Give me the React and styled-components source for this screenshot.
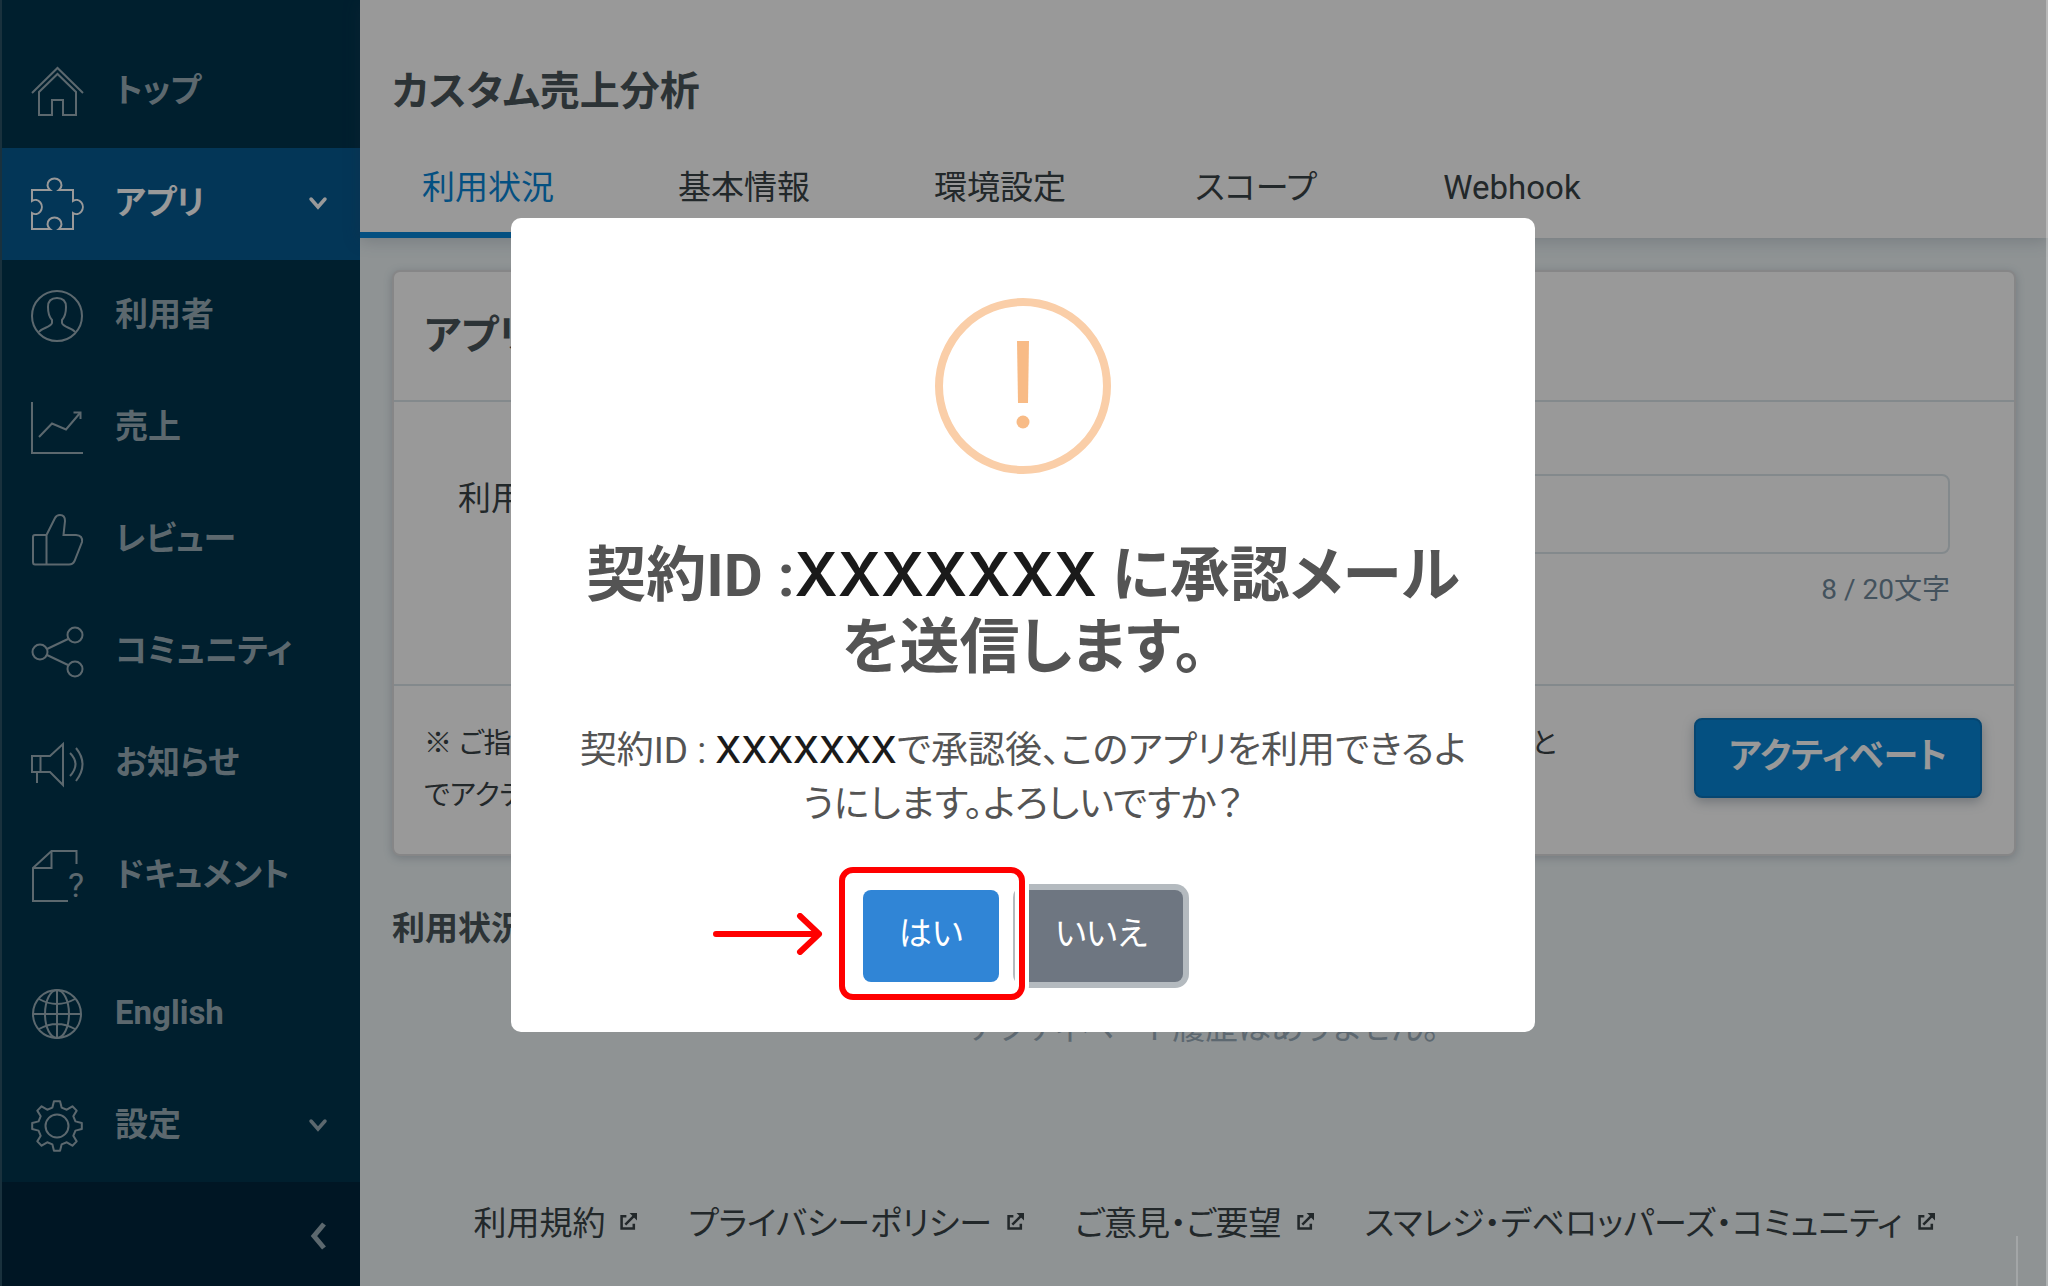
import React from 'react';
import styled, { createGlobalStyle } from 'styled-components';

const GlobalStyle = createGlobalStyle`
  * {
    box-sizing: border-box;
  }

  body {
    margin: 0;
    background: #eef5f7;
    color: #3a4347;
    font-family: Roboto, 'Noto Sans CJK JP', sans-serif;
    font-size: 33px;
    font-feature-settings: 'palt';
  }

  h1, h2, p {
    margin: 0;
  }

  a {
    color: inherit;
    text-decoration: none;
  }

  button, input {
    font: inherit;
    font-feature-settings: inherit;
  }
`;

const Page = styled.div`
  display: flex;
  min-height: 100vh;
`;

/* ---------- sidebar ---------- */

const Sidebar = styled.nav`
  display: flex;
  flex-direction: column;
  flex: none;
  width: 360px;
  padding-top: 36px;
  background: #00344e;
  border-left: 2px solid #2b5366;
`;

const NavList = styled.div`
  display: flex;
  flex-direction: column;
  margin-bottom: ${(props) => (props.$last ? 'auto' : '26px')};
`;

const NavItem = styled.a`
  display: flex;
  align-items: center;
  gap: 32px;
  height: 112px;
  padding: 0 33px 0 29px;
  font-weight: bold;
  color: ${(props) => (props.$active ? '#ffffff' : '#99aeb8')};
  background: ${(props) => (props.$active ? '#065a91' : 'transparent')};
`;

const NavIcon = styled.svg`
  flex: none;
  width: 52px;
  height: 52px;
  overflow: visible;
  fill: none;
  stroke: currentColor;
  stroke-width: 2;
`;

const IconMark = styled.text`
  fill: currentColor;
  stroke: none;
  font-family: Roboto, sans-serif;
  font-size: 34px;
  font-weight: 400;
`;

const NavLabel = styled.span`
  flex: 1;
  line-height: 48px;
  padding-bottom: 2px;
`;

const Chevron = styled.svg`
  flex: none;
  width: 18px;
  height: 12px;
  overflow: visible;
  fill: none;
  stroke: currentColor;
  stroke-width: 3.5;
  stroke-linecap: round;
`;

const CollapseButton = styled.button`
  display: flex;
  align-items: center;
  justify-content: flex-end;
  height: 104px;
  padding: 4px 34px 0;
  border: 0;
  background: #00253c;
  color: #99aeb8;
`;

const CollapseIcon = styled.svg`
  width: 16px;
  height: 28px;
  fill: none;
  stroke: currentColor;
  stroke-width: 5;
`;

/* ---------- main ---------- */

const Main = styled.main`
  display: flex;
  flex-direction: column;
  flex: 1;
  min-width: 0;
`;

const Header = styled.header`
  background: #ffffff;
  box-shadow: 0 2px 16px rgba(60, 80, 100, 0.25);
`;

const PageTitle = styled.h1`
  padding: 62px 32px 0;
  font-size: 40px;
  line-height: 60px;
  color: #4a555a;
`;

const Tabs = styled.div`
  display: flex;
  margin-top: 16px;
`;

const Tab = styled.button`
  width: 256px;
  height: 100px;
  padding: 6px 0 0;
  border: 0;
  border-bottom: 6px solid ${(props) => (props.$active ? '#0885d7' : 'transparent')};
  background: none;
  line-height: 48px;
  color: ${(props) => (props.$active ? '#0885d7' : '#3a4347')};
`;

const Content = styled.div`
  display: flex;
  flex-direction: column;
  flex: 1;
  padding: 32px 32px 34px;
`;

const Card = styled.section`
  border: 2px solid #dfe0e2;
  border-radius: 8px;
  background: #ffffff;
  box-shadow: 0 2px 8px rgba(60, 80, 100, 0.25);
`;

const CardTitle = styled.h2`
  height: 130px;
  padding: 34px 30px;
  border-bottom: 2px solid #dbe5ea;
  font-size: 40px;
  line-height: 60px;
  color: #4a555a;
`;

const Field = styled.div`
  display: flex;
  height: 284px;
  padding: 72px 64px 0;
  border-bottom: 2px solid #dbe5ea;
`;

const FieldLabel = styled.label`
  width: 300px;
  line-height: 50px;
`;

const FieldControl = styled.div`
  display: flex;
  flex-direction: column;
  flex: 1;
`;

const TextInput = styled.input`
  height: 80px;
  padding: 0 20px;
  border: 2px solid #dbe5ea;
  border-radius: 8px;
  background: #ffffff;
  color: #3a4347;
`;

const Counter = styled.span`
  padding-top: 16px;
  font-size: 28px;
  line-height: 40px;
  text-align: right;
  color: #70899b;
`;

const CardFooter = styled.div`
  display: flex;
  align-items: flex-start;
  justify-content: space-between;
  height: 168px;
  padding: 32px 32px 32px 30px;
`;

const Note = styled.p`
  font-size: 28px;
  line-height: 52px;
`;

const ActivateButton = styled.button`
  flex: none;
  width: 288px;
  height: 80px;
  padding: 0 0 2px;
  border: 2px solid #0a76bd;
  border-radius: 8px;
  background: #0885d7;
  box-shadow: 0 4px 12px rgba(60, 80, 100, 0.35);
  font-size: 35px;
  line-height: 48px;
  font-weight: bold;
  color: #ffffff;
`;

const SectionTitle = styled.h2`
  padding-top: 48px;
  font-size: 33px;
  line-height: 50px;
  color: #4a555a;
`;

const Empty = styled.p`
  padding-top: 50px;
  line-height: 48px;
  text-align: center;
  color: #9badbb;
`;

const Footer = styled.footer`
  display: flex;
  justify-content: center;
  gap: 51px;
  margin-top: auto;
`;

const FooterLink = styled.a`
  display: flex;
  align-items: center;
  gap: 15px;
  line-height: 56px;
`;

const LinkIcon = styled.svg`
  width: 17px;
  height: 17px;
  margin-bottom: 6px;
  fill: none;
  stroke: currentColor;
  stroke-width: 2.4;
`;

/* edge of the widget docked in the lower corner */
const DockEdge = styled.div`
  position: fixed;
  right: 30px;
  bottom: 0;
  width: 2px;
  height: 50px;
  background: rgba(255, 255, 255, 0.18);
`;

/* ---------- dialog ---------- */

const Overlay = styled.div`
  position: fixed;
  inset: 0;
  display: flex;
  align-items: center;
  justify-content: center;
  padding-bottom: 36px;
  border-right: 2px solid rgba(255, 255, 255, 0.3);
  background: rgba(0, 0, 0, 0.4);
`;

const Dialog = styled.div`
  display: flex;
  flex-direction: column;
  align-items: center;
  width: 1024px;
  max-width: 100%;
  padding: 80px 40px 50px;
  border-radius: 10px;
  background: #ffffff;
  text-align: center;
  color: #545454;
`;

const WarningIcon = styled.svg`
  width: 176px;
  height: 176px;
`;

const DialogTitle = styled.h2`
  padding-top: 66px;
  font-size: 60px;
  line-height: 72px;
`;

const DialogText = styled.p`
  padding-top: 40px;
  font-size: 37px;
  line-height: 54px;
`;

const Masked = styled.span`
  font-family: Inter, sans-serif;
  font-weight: ${(props) => (props.$strong ? 600 : 500)};
  line-height: 1;
  color: #1a1a1a;
`;

const Actions = styled.div`
  display: flex;
  gap: 20px;
  padding-top: 58px;
`;

const DialogButton = styled.button`
  height: 92px;
  padding: 0 36px 4px;
  border: 0;
  border-radius: 8px;
  font-size: 33px;
  line-height: 48px;
  color: #ffffff;
  background: ${(props) => (props.$focused ? '#6e7681' : '#3085d6')};
  box-shadow: ${(props) => (props.$focused ? '0 0 0 6px #b4babf' : 'none')};
`;

const Pointed = styled.div`
  position: relative;
  z-index: 1;
`;

const Frame = styled.div`
  position: absolute;
  inset: -23px -26px -18px -24px;
  border: 6px solid #ff0000;
  border-radius: 14px;
  box-shadow: 0 0 0 4px #ffffff, inset 0 0 0 4px #ffffff;
  pointer-events: none;
`;

const Arrow = styled.svg`
  position: absolute;
  top: 23px;
  right: 176px;
  width: 110px;
  height: 42px;
  fill: none;
  stroke: #ff0000;
  stroke-width: 6;
  stroke-linecap: round;
  stroke-linejoin: round;
`;

const gearPoints = [];
for (let i = 0; i < 8; i += 1) {
  [[-14, 19], [-7, 25], [7, 25], [14, 19]].forEach(([deg, r]) => {
    const a = ((i * 45 + deg) * Math.PI) / 180;
    gearPoints.push(`${(26 + r * Math.sin(a)).toFixed(2)},${(26 - r * Math.cos(a)).toFixed(2)}`);
  });
}

const icons = {
  home: (
    <>
      <path d="M1 27L26.5 2L52 27" />
      <path d="M8 49V26L26.5 8L45 26V49H32V34H21V49Z" />
    </>
  ),
  puzzle: (
    <path d="M1 12H19A7 6.5 0 1 1 28 12H42V23A6.5 7 0 1 1 42 35V51H28A7 6.5 0 1 0 19 51H1V35A6.5 7 0 1 0 1 23Z" />
  ),
  user: (
    <>
      <circle cx="26" cy="26" r="25" />
      <path d="M8 42C11 38 20 37 21 33V30C18 27 17 23 17 17C17 11 20 8 26 8C32 8 35 11 35 17C35 23 34 27 31 30V33C32 37 41 38 44 42" />
    </>
  ),
  chart: (
    <>
      <path d="M1 0V51H52" />
      <path d="M8 35L21 21.5L35 27.5L49 11" />
      <path d="M42.5 10.5H49.5V17" />
    </>
  ),
  thumb: (
    <path d="M15.5 21V50.5M15.5 21H4Q2 21 2 23V48Q2 50.5 4 50.5H38Q42 50.5 43.5 47L51 28Q52 21.5 45 21H32.5L34 7Q34 1 29 1Q25.5 1 24 4L15.5 21" />
  ),
  share: (
    <>
      <circle cx="9" cy="26" r="7.5" />
      <circle cx="44" cy="9" r="7.5" />
      <circle cx="44" cy="43" r="7.5" />
      <path d="M16 23L37 13M16 29L37 39" />
    </>
  ),
  horn: (
    <>
      <path d="M1 18H19L32 6V47L19 34H1Z" />
      <path d="M9.5 18V34M6 34V45" />
      <path d="M39 15Q50 26 39 38M45 10Q58 26 45 43" />
    </>
  ),
  doc: (
    <>
      <path d="M45.5 14V1H20.5L2 18V51H37" />
      <path d="M20.5 1V18H2" />
      <IconMark x="37" y="47">?</IconMark>
    </>
  ),
  globe: (
    <>
      <circle cx="26" cy="26" r="24" />
      <ellipse cx="26" cy="26" rx="12" ry="24" />
      <path d="M26 2V50M2 26H50M8 11Q26 21 44 11M8 41Q26 31 44 41" />
    </>
  ),
  gear: (
    <>
      <polygon points={gearPoints.join(' ')} strokeLinejoin="round" />
      <circle cx="26" cy="26" r="11.5" />
    </>
  ),
};

const mainMenu = [
  { icon: 'home', label: 'トップ' },
  { icon: 'puzzle', label: 'アプリ', active: true, open: true },
  { icon: 'user', label: '利用者' },
  { icon: 'chart', label: '売上' },
  { icon: 'thumb', label: 'レビュー' },
  { icon: 'share', label: 'コミュニティ' },
  { icon: 'horn', label: 'お知らせ' },
  { icon: 'doc', label: 'ドキュメント' },
];

const subMenu = [
  { icon: 'globe', label: 'English' },
  { icon: 'gear', label: '設定', open: true },
];

const tabs = ['利用状況', '基本情報', '環境設定', 'スコープ', 'Webhook'];

const links = [
  '利用規約',
  'プライバシーポリシー',
  'ご意見・ご要望',
  'スマレジ・デベロッパーズ・コミュニティ',
];

const Menu = ({ items, last }) => (
  <NavList $last={last}>
    {items.map((item) => (
      <NavItem href="#" key={item.label} $active={item.active}>
        <NavIcon viewBox="0 0 52 52" aria-hidden="true">{icons[item.icon]}</NavIcon>
        <NavLabel>{item.label}</NavLabel>
        {item.open && (
          <Chevron viewBox="0 0 18 12" aria-hidden="true">
            <path d="M2 1L9 9L16 1" />
          </Chevron>
        )}
      </NavItem>
    ))}
  </NavList>
);

const ConfirmDialog = () => (
  <Overlay>
    <Dialog role="dialog" aria-modal="true" aria-labelledby="dialog-title">
      <WarningIcon viewBox="0 0 176 176" aria-hidden="true">
        <circle cx="88" cy="88" r="84" fill="none" stroke="#facea8" strokeWidth="8" />
        <path d="M82 43H94L93 105H83Z" fill="#f8bb86" />
        <circle cx="88" cy="124" r="6.5" fill="#f8bb86" />
      </WarningIcon>
      <DialogTitle id="dialog-title">
        契約ID :<Masked $strong>XXXXXXX</Masked> に承認メール
        <br />
        を送信します。
      </DialogTitle>
      <DialogText>
        契約ID : <Masked>XXXXXXX</Masked>で承認後、このアプリを利用できるよ
        <br />
        うにします。よろしいですか？
      </DialogText>
      <Actions>
        <Pointed>
          <DialogButton type="button">はい</DialogButton>
          <Frame />
          <Arrow viewBox="0 0 110 42" aria-hidden="true">
            <path d="M3 21H106M87 3L106 21L87 39" />
          </Arrow>
        </Pointed>
        <DialogButton type="button" $focused>いいえ</DialogButton>
      </Actions>
    </Dialog>
  </Overlay>
);

const App = () => (
  <>
    <GlobalStyle />
    <Page>
      <Sidebar>
        <Menu items={mainMenu} />
        <Menu items={subMenu} last />
        <CollapseButton type="button" aria-label="メニューを閉じる">
          <CollapseIcon viewBox="0 0 16 28" aria-hidden="true">
            <path d="M14 2L4 14L14 26" />
          </CollapseIcon>
        </CollapseButton>
      </Sidebar>
      <Main>
        <Header>
          <PageTitle>カスタム売上分析</PageTitle>
          <Tabs role="tablist">
            {tabs.map((tab, i) => (
              <Tab type="button" role="tab" key={tab} aria-selected={i === 0} $active={i === 0}>
                {tab}
              </Tab>
            ))}
          </Tabs>
        </Header>
        <Content>
          <Card>
            <CardTitle>アプリのアクティベート</CardTitle>
            <Field>
              <FieldLabel htmlFor="contract">利用者の契約ID</FieldLabel>
              <FieldControl>
                <TextInput id="contract" type="text" defaultValue="" />
                <Counter>8 / 20文字</Counter>
              </FieldControl>
            </Field>
            <CardFooter>
              <Note>
                ※ ご指定の契約IDの管理者に承認メールを送信します。メールに記載のリンクから承認すること
                <br />
                でアクティベートが完了します。
              </Note>
              <ActivateButton type="button">アクティベート</ActivateButton>
            </CardFooter>
          </Card>
          <SectionTitle>利用状況の履歴</SectionTitle>
          <Empty>アクティベート履歴はありません。</Empty>
          <Footer>
            {links.map((link) => (
              <FooterLink href="#" key={link}>
                {link}
                <LinkIcon viewBox="0 0 16 16" aria-hidden="true">
                  <path d="M6 3H1.5V14.500H13V10M5 11L13 3" />
                  <path d="M9 0H16V7Z" fill="currentColor" stroke="none" />
                </LinkIcon>
              </FooterLink>
            ))}
          </Footer>
        </Content>
      </Main>
    </Page>
    <ConfirmDialog />
    <DockEdge />
  </>
);

export default App;
